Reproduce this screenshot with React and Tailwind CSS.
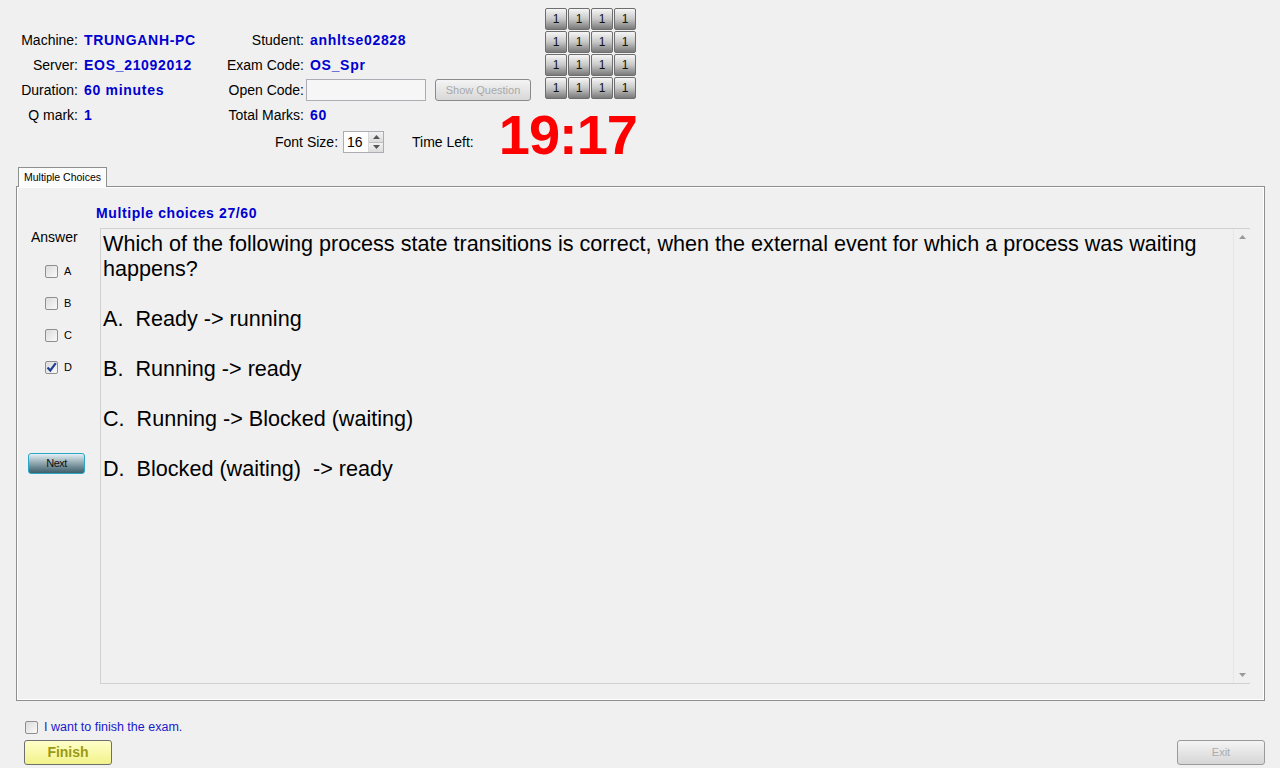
import React, { useState } from 'react';

const font = { fontFamily: '"Liberation Sans", Arial, sans-serif' };

const question =
  "Which of the following process state transitions is correct, when the external event for which a process was waiting happens?\n\nA.  Ready -> running\n\nB.  Running -> ready\n\nC.  Running -> Blocked (waiting)\n\nD.  Blocked (waiting)  -> ready";

function Check({ checked, onClick }) {
  return (
    <span
      onClick={onClick}
      className="w-[13px] h-[13px] shrink-0 border border-[#8e8f8f] rounded-[2px] bg-gradient-to-br from-[#dcdcdc] to-[#fafafa] flex items-center justify-center cursor-pointer"
    >
      {checked && (
        <svg width="11" height="11" viewBox="0 0 11 11">
          <path d="M1.5 5.5 L4.3 8.5 L9.8 1.2" fill="none" stroke="#1f3f93" strokeWidth="2.2" />
        </svg>
      )}
    </span>
  );
}

function Info({ label, value }) {
  return (
    <>
      <div className="text-right pr-[2px] whitespace-nowrap">{label}</div>
      <div className="pl-[4px] font-bold text-[#0000d0] tracking-[0.7px] whitespace-nowrap">{value}</div>
    </>
  );
}

export default function App() {
  const [answers, setAnswers] = useState({ A: false, B: false, C: false, D: true });
  const [finish, setFinish] = useState(false);

  return (
    <div className="w-[1280px] h-[768px] bg-[#f0f0f0] text-black overflow-hidden" style={font}>
      {/* header */}
      <div className="flex h-[167px]">
        <div className="w-[545px] shrink-0 pt-[27px] text-[14px]">
          <div className="grid grid-cols-[80px_144px_82px_auto] auto-rows-[25px] items-center leading-[16px]">
            <Info label="Machine:" value="TRUNGANH-PC" />
            <Info label="Student:" value="anhltse02828" />
            <Info label="Server:" value="EOS_21092012" />
            <Info label="Exam Code:" value="OS_Spr" />
            <Info label="Duration:" value="60 minutes" />
            <div className="text-right pr-[2px]">Open Code:</div>
            <div className="flex items-center">
              <div className="w-[120px] h-[22px] border border-[#abadb3] bg-[#f6f6f6]" />
              <button className="ml-[9px] w-[96px] h-[22px] rounded-[3px] border border-[#8a8a8a] bg-gradient-to-b from-[#f4f4f4] to-[#d8d8d8] text-[11px] text-[#a8a8a8] whitespace-nowrap">
                Show Question
              </button>
            </div>
            <Info label="Q mark:" value="1" />
            <Info label="Total Marks:" value="60" />
          </div>
          <div className="flex items-center h-[30px] pl-[275px] whitespace-nowrap">
            <span className="shrink-0">Font Size:</span>
            <div className="ml-[5px] w-[41px] h-[22px] shrink-0 border border-[#abadb3] bg-white flex items-center">
              <span className="pl-[3px] flex-1 text-[14px]">16</span>
              <div className="w-[15px] h-[20px] flex flex-col border-l border-[#d8d8d8]">
                <div className="flex-1 flex items-center justify-center bg-gradient-to-b from-[#f2f2f2] to-[#dcdcdc] border-b border-[#c0c0c0]">
                  <svg width="7" height="4" viewBox="0 0 7 4"><path d="M0 4 L3.5 0 L7 4Z" fill="#555" /></svg>
                </div>
                <div className="flex-1 flex items-center justify-center bg-gradient-to-b from-[#f2f2f2] to-[#dcdcdc]">
                  <svg width="7" height="4" viewBox="0 0 7 4"><path d="M0 0 L3.5 4 L7 0Z" fill="#555" /></svg>
                </div>
              </div>
            </div>
            <span className="ml-[28px] shrink-0">Time Left:</span>
            <span className="self-start shrink-0 mt-[-20px] ml-[25px] text-[56px] leading-none font-bold tracking-[-1px] text-[#ff0000]">19:17</span>
          </div>
        </div>
        <div className="pt-[8px]">
          <div className="grid grid-cols-[repeat(4,22px)] gap-[1px]">
            {Array.from({ length: 16 }).map((_, i) => (
              <button
                key={i}
                className="w-[22px] h-[22px] rounded-[2px] border border-[#6e6e6e] bg-gradient-to-b from-[#f6f6f6] via-[#c8c8c8] to-[#7a7a7a] text-[12px] leading-none text-[#111]"
              >
                1
              </button>
            ))}
          </div>
        </div>
      </div>

      {/* tab */}
      <div className="ml-[18px] flex">
        <div className="h-[20px] px-[5px] flex items-center border border-b-0 border-[#8e8f8f] bg-[#fcfcfc] text-[10.5px] relative z-10 mb-[-1px]">
          Multiple Choices
        </div>
      </div>
      <div className="ml-[16px] w-[1249px] h-[515px] border border-[#8e8f8f] bg-[#f0f0f0]">
        <div className="h-full border border-white pt-[17px]">
          <div className="pl-[78px] text-[14px] leading-[16px] font-bold text-[#0000d0] tracking-[0.6px]">
            Multiple choices 27/60
          </div>
          <div className="flex mt-[7px]">
            <div className="w-[82px] shrink-0 pt-[1px]">
              <div className="pl-[13px] text-[14px] leading-[16px]">Answer</div>
              <div className="flex flex-col gap-[19px] mt-[20px] pl-[27px]">
                {['A', 'B', 'C', 'D'].map((k) => (
                  <label key={k} className="flex items-center h-[13px] text-[11px]">
                    <Check checked={answers[k]} onClick={() => setAnswers({ ...answers, [k]: !answers[k] })} />
                    <span className="ml-[6px]">{k}</span>
                  </label>
                ))}
              </div>
              <button className="mt-[79px] ml-[10px] w-[57px] h-[21px] rounded-[3px] border border-[#2aa6c8] bg-gradient-to-b from-[#e4f0f4] via-[#8da4ad] to-[#3e5f6a] text-[11px] text-[#111] tracking-[-0.5px]">
                Next
              </button>
            </div>
            <div className="w-[1150px] h-[456px] border-t border-l border-b border-[#d0d0d0] flex">
              <div className="flex-1 pl-[2px] pt-[2px] text-[21.6px] leading-[25px] whitespace-pre-wrap">
                {question}
              </div>
              <div className="w-[17px] flex flex-col items-center justify-between py-[6px] border-l border-[#e6e6e6]">
                <svg width="7" height="4" viewBox="0 0 7 4"><path d="M0 4 L3.5 0 L7 4Z" fill="#9a9a9a" /></svg>
                <svg width="7" height="4" viewBox="0 0 7 4"><path d="M0 0 L3.5 4 L7 0Z" fill="#9a9a9a" /></svg>
              </div>
            </div>
          </div>
        </div>
      </div>

      {/* bottom */}
      <div className="mt-[20px] ml-[25px] flex items-center h-[13px]">
        <Check checked={finish} onClick={() => setFinish(!finish)} />
        <span className="ml-[6px] text-[12.5px] text-[#1a1acd]">I want to finish the exam.</span>
      </div>
      <div className="mt-[6px] flex justify-between pl-[24px] pr-[15px]">
        <button className="w-[88px] h-[25px] rounded-[3px] border border-[#6f6f6f] bg-gradient-to-b from-[#ffffc8] to-[#f2f28a] text-[14px] font-bold text-[#9a9a14]">
          Finish
        </button>
        <button className="w-[88px] h-[25px] rounded-[3px] border border-[#9a9a9a] bg-gradient-to-b from-[#f4f4f4] to-[#d6d6d6] text-[11px] text-[#ababab]">
          Exit
        </button>
      </div>
    </div>
  );
}
